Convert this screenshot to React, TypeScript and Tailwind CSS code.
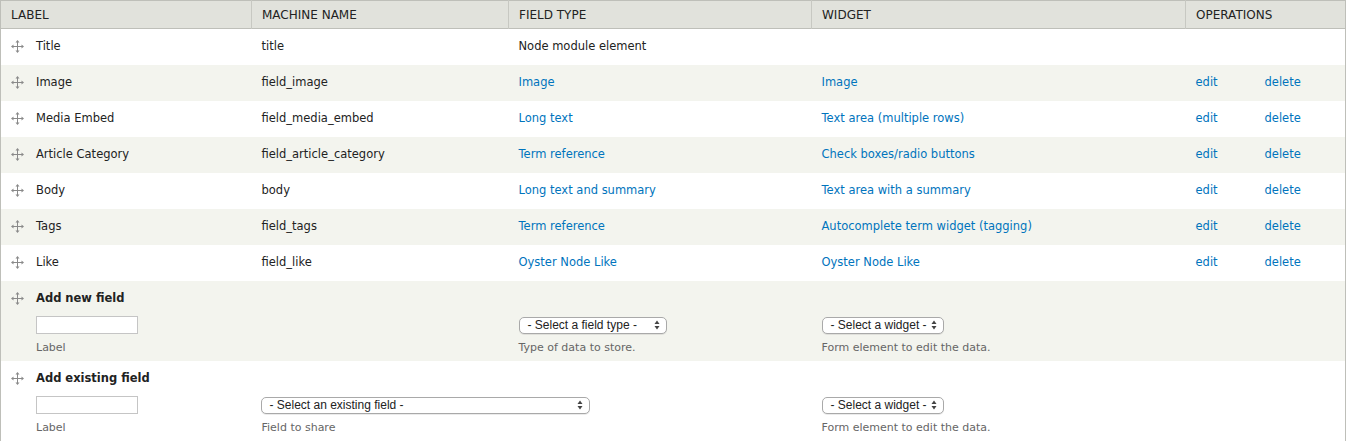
import React from 'react'

const DragIcon = () => (
  <svg width="13" height="13" viewBox="0 0 13 13" className="shrink-0">
    <g stroke="#8a8a8a" strokeWidth="1" fill="none">
      <line x1="6.5" y1="1" x2="6.5" y2="12" />
      <line x1="1" y1="6.5" x2="12" y2="6.5" />
    </g>
    <g fill="#8a8a8a">
      <polygon points="6.5,0 4.5,2.5 8.5,2.5" />
      <polygon points="6.5,13 4.5,10.5 8.5,10.5" />
      <polygon points="0,6.5 2.5,4.5 2.5,8.5" />
      <polygon points="13,6.5 10.5,4.5 10.5,8.5" />
    </g>
  </svg>
)

const FakeSelect = ({ label, width }: { label: string; width: string }) => (
  <div
    className={`flex items-center justify-between h-[17px] ${width} rounded-[5px] border border-[#a9a9a9] bg-white pl-[8px] pr-[6px] text-[12px] text-[#222] whitespace-nowrap shadow-[0_1px_0_rgba(0,0,0,0.08)]`}
    style={{ fontFamily: '"Liberation Sans", Arial, sans-serif' }}
  >
    <span className="leading-none">{label}</span>
    <svg width="6" height="10" viewBox="0 0 6 10" className="shrink-0">
      <polygon points="3,0.5 0.5,4 5.5,4" fill="#444" />
      <polygon points="3,9.5 0.5,6 5.5,6" fill="#444" />
    </svg>
  </div>
)

type Row = {
  label: string
  machine: string
  type: string
  widget: string
  plain?: boolean
}

const rows: Row[] = [
  { label: 'Title', machine: 'title', type: 'Node module element', widget: '', plain: true },
  { label: 'Image', machine: 'field_image', type: 'Image', widget: 'Image' },
  { label: 'Media Embed', machine: 'field_media_embed', type: 'Long text', widget: 'Text area (multiple rows)' },
  { label: 'Article Category', machine: 'field_article_category', type: 'Term reference', widget: 'Check boxes/radio buttons' },
  { label: 'Body', machine: 'body', type: 'Long text and summary', widget: 'Text area with a summary' },
  { label: 'Tags', machine: 'field_tags', type: 'Term reference', widget: 'Autocomplete term widget (tagging)' },
  { label: 'Like', machine: 'field_like', type: 'Oyster Node Like', widget: 'Oyster Node Like' },
]

const th = 'h-[28px] px-[10px] text-left font-normal uppercase text-[12px] border-l border-[#c7c8c2] first:border-l-0'
const link = 'text-[#0074bd]'
const desc = 'mt-[6px] text-[11px] text-[#666]'

export default function App() {
  return (
    <div
      className="w-[1349px] h-[441px] overflow-hidden bg-white text-[11.5px] text-[#222]"
      style={{ fontFamily: '"DejaVu Sans", Verdana, sans-serif' }}
    >
      <table className="w-[1346px] table-fixed border-collapse border-l border-r border-t border-[#bebfb9]">
        <colgroup>
          <col className="w-[251px]" />
          <col className="w-[257px]" />
          <col className="w-[303px]" />
          <col className="w-[374px]" />
          <col className="w-[69px]" />
          <col />
        </colgroup>
        <thead>
          <tr className="bg-[#e1e2dc] border-b border-[#bebfb9]">
            <th className={th}>Label</th>
            <th className={th}>Machine name</th>
            <th className={th}>Field type</th>
            <th className={th}>Widget</th>
            <th className={th} colSpan={2}>Operations</th>
          </tr>
        </thead>
        <tbody>
          {rows.map((r, i) => (
            <tr key={r.label} className={`h-[36px] ${i % 2 === 1 ? 'bg-[#f3f4ee]' : 'bg-white'}`}>
              <td className="px-[10px]">
                <div className="flex items-center gap-[12px]">
                  <DragIcon />
                  <span>{r.label}</span>
                </div>
              </td>
              <td className="px-[10px]">{r.machine}</td>
              <td className={`px-[10px] ${r.plain ? '' : link}`}>{r.type}</td>
              <td className={`px-[10px] ${link}`}>{r.widget}</td>
              <td className={`px-[10px] ${link}`}>{r.plain ? '' : 'edit'}</td>
              <td className={`px-[10px] ${link}`}>{r.plain ? '' : 'delete'}</td>
            </tr>
          ))}

          <tr className="h-[80px] bg-[#f3f4ee] align-top">
            <td className="px-[10px] pt-[9px]">
              <div className="flex items-center gap-[12px] h-[18px]">
                <DragIcon />
                <span className="font-bold">Add new field</span>
              </div>
              <div className="pl-[25px] mt-[8px]">
                <div className="w-[102px] h-[18px] border border-[#c5c5c5] bg-white" />
                <div className={desc}>Label</div>
              </div>
            </td>
            <td />
            <td className="px-[10px] pt-[36px]">
              <FakeSelect label="- Select a field type -" width="w-[148px]" />
              <div className={desc}>Type of data to store.</div>
            </td>
            <td className="px-[10px] pt-[36px]">
              <FakeSelect label="- Select a widget -" width="w-[122px]" />
              <div className={desc}>Form element to edit the data.</div>
            </td>
            <td />
            <td />
          </tr>

          <tr className="h-[80px] bg-white align-top">
            <td className="px-[10px] pt-[9px]">
              <div className="flex items-center gap-[12px] h-[18px]">
                <DragIcon />
                <span className="font-bold">Add existing field</span>
              </div>
              <div className="pl-[25px] mt-[8px]">
                <div className="w-[102px] h-[18px] border border-[#c5c5c5] bg-white" />
                <div className={desc}>Label</div>
              </div>
            </td>
            <td className="px-[9px] pt-[36px]" colSpan={2}>
              <FakeSelect label="- Select an existing field -" width="w-[329px]" />
              <div className={`${desc} pl-[1px]`}>Field to share</div>
            </td>
            <td className="px-[10px] pt-[36px]">
              <FakeSelect label="- Select a widget -" width="w-[122px]" />
              <div className={desc}>Form element to edit the data.</div>
            </td>
            <td />
            <td />
          </tr>
        </tbody>
      </table>
    </div>
  )
}
